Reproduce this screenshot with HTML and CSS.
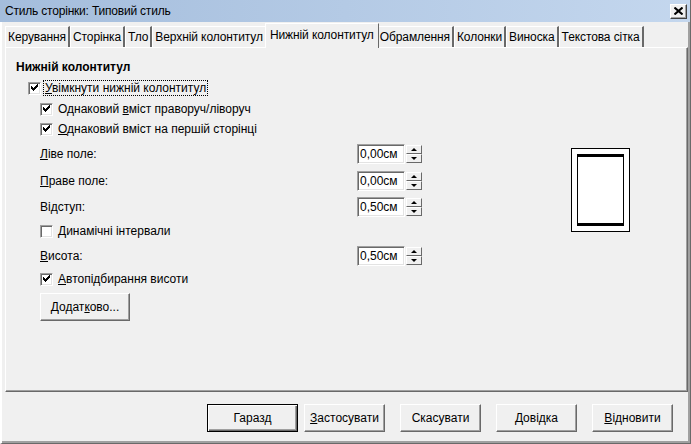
FILE: index.html
```html
<!DOCTYPE html>
<html>
<head>
<meta charset="utf-8">
<link rel="stylesheet" href="styles.css">
</head>
<body>
<div class="window">
  <div class="titlebar">
    <span class="title">Стиль сторінки: Типовий стиль</span>
    <span class="close"><svg width="9" height="8" viewBox="0 0 9 8"><path d="M0.5 0.5 L8.5 7.5 M8.5 0.5 L0.5 7.5" stroke="#000" stroke-width="2"/></svg></span>
  </div>
  <div class="tabs">
    <span class="tab">Керування</span>
    <span class="tab">Сторінка</span>
    <span class="tab">Тло</span>
    <span class="tab">Верхній колонтитул</span>
    <span class="tab active">Нижній колонтитул</span>
    <span class="tab">Обрамлення</span>
    <span class="tab">Колонки</span>
    <span class="tab">Виноска</span>
    <span class="tab">Текстова сітка</span>
  </div>
  <div class="panel">
    <div class="left">
      <div class="heading">Нижній колонтитул</div>
      <div class="row cbrow r-cb1 lvl1">
        <span class="cb checked"></span>
        <span class="focus"><u>У</u>вімкнути нижній колонтитул</span>
      </div>
      <div class="row cbrow r-cb2 lvl2">
        <span class="cb checked"></span>
        <span class="lbl">Однаковий <u>в</u>міст праворуч/ліворуч</span>
      </div>
      <div class="row cbrow r-cb3 lvl2">
        <span class="cb checked"></span>
        <span class="lbl"><u>О</u>днаковий вміст на першій сторінці</span>
      </div>
      <div class="row fieldrow r-f1 lvl2">
        <span class="flabel"><u>Л</u>іве поле:</span>
        <span class="spin"><span class="val">0,00см</span><span class="arrows"><span class="up"></span><span class="down"></span></span></span>
      </div>
      <div class="row fieldrow r-f2 lvl2">
        <span class="flabel"><u>П</u>раве поле:</span>
        <span class="spin"><span class="val">0,00см</span><span class="arrows"><span class="up"></span><span class="down"></span></span></span>
      </div>
      <div class="row fieldrow r-f3 lvl2">
        <span class="flabel">Ві<u>д</u>ступ:</span>
        <span class="spin"><span class="val">0,50см</span><span class="arrows"><span class="up"></span><span class="down"></span></span></span>
      </div>
      <div class="row cbrow r-cb4 lvl2">
        <span class="cb"></span>
        <span class="lbl"><u>Д</u>инамічні інтервали</span>
      </div>
      <div class="row fieldrow r-f4 lvl2">
        <span class="flabel"><u>В</u>исота:</span>
        <span class="spin"><span class="val">0,50см</span><span class="arrows"><span class="up"></span><span class="down"></span></span></span>
      </div>
      <div class="row cbrow r-cb5 lvl2">
        <span class="cb checked"></span>
        <span class="lbl"><u>А</u>втопідбирання висоти</span>
      </div>
      <div class="row r-btn lvl2">
        <span class="btn more">Додат<u>к</u>ово...</span>
      </div>
    </div>
    <div class="preview">
      <div class="page"><div class="inner"></div></div>
    </div>
  </div>
  <div class="footer">
    <span class="btn fbtn default">Гаразд</span>
    <span class="btn fbtn apply"><u>З</u>астосувати</span>
    <span class="btn fbtn">Скасувати</span>
    <span class="btn fbtn"><u>Д</u>овідка</span>
    <span class="btn fbtn"><u>В</u>ідновити</span>
  </div>
</div>
</body>
</html>
```
FILE: styles.css
```css
* { box-sizing: border-box; }
html, body { margin: 0; padding: 0; }
body {
  width: 691px; height: 444px; overflow: hidden;
  background: #f0f0f0;
  font-family: "Liberation Sans", Arial, sans-serif;
  font-size: 12px;
  color: #000;
}
u { text-decoration: underline; text-underline-offset: 1px; }
.window {
  width: 691px; height: 444px;
  display: flex; flex-direction: column;
  border-left: 2px solid #fff;
  border-right: 1px solid #696969;
  border-bottom: 1px solid #696969;
  box-shadow: inset -2px -2px 0 #a0a0a0;
  position: relative;
}
.titlebar {
  height: 22px; flex: none;
  margin-left: -2px;
  background: linear-gradient(to right, #a4bddc, #c4d7ee);
  display: flex; align-items: center; justify-content: space-between;
  padding: 0 3px 0 5px;
}
.title { font-size: 12px; color: #000; letter-spacing: -0.2px; }
.close {
  width: 17px; height: 15px;
  background: #f0f0f0;
  border: 1px solid; border-color: #fff #404040 #404040 #fff;
  box-shadow: inset -1px -1px 0 #a0a0a0;
  display: flex; align-items: center; justify-content: center;
}
.tabs {
  display: flex; height: 25px; flex: none;
  padding-left: 3px; align-items: flex-end;
  letter-spacing: -0.1px;
}
.tab {
  height: 21px; padding: 0 2px 0 2px;
  display: flex; align-items: center;
  border-top: 1px solid #fff; border-left: 1px solid #fff;
  border-right: 2px solid #696969;
  white-space: nowrap;
  background: #f0f0f0;
}
.tab.active {
  height: 25px; margin: 0 -2px -1px -2px; padding: 0 4px 2px 4px;
  position: relative; z-index: 2;
  border-right-width: 1px;
}
.panel {
  height: 345px; flex: none;
  margin: 0 0 0 3px; width: 683px;
  border-top: 1px solid #fff; border-left: 1px solid #fff;
  border-right: 1px solid #696969; border-bottom: 1px solid #696969;
  box-shadow: inset -1px -1px 0 #a0a0a0;
  display: flex; position: relative;
}
.left { width: 430px; padding-left: 10px; display: flex; flex-direction: column; }
.heading { font-weight: bold; margin-top: 11px; height: 16px; line-height: 16px; }
.row { display: flex; align-items: center; }
.cbrow { height: 16px; }
.fieldrow { height: 20px; width: 406px; justify-content: space-between; }
.lvl1 { padding-left: 12px; }
.lvl2 { padding-left: 24px; }
.r-cb1 { margin-top: 5px; }
.r-cb2 { margin-top: 5px; }
.r-cb3 { margin-top: 4px; }
.r-f1 { margin-top: 7px; }
.r-f2 { margin-top: 7px; }
.r-f3 { margin-top: 6px; }
.r-cb4 { margin-top: 6px; }
.r-f4 { margin-top: 7px; }
.r-cb5 { margin-top: 5px; }
.r-btn { margin-top: 6px; }
.cb {
  width: 13px; height: 13px; flex: none;
  background: #fff;
  border: 1px solid; border-color: #a0a0a0 #fff #fff #a0a0a0;
  box-shadow: inset 1px 1px 0 #696969, inset -1px -1px 0 #e3e3e3;
  margin-right: 4px; position: relative;
}
.cb.checked::after {
  content: ""; position: absolute; left: 2px; top: 1px;
  width: 7px; height: 7px;
  background:
    linear-gradient(#000,#000) 0 2px/1px 3px no-repeat,
    linear-gradient(#000,#000) 1px 3px/1px 3px no-repeat,
    linear-gradient(#000,#000) 2px 4px/1px 3px no-repeat,
    linear-gradient(#000,#000) 3px 3px/1px 3px no-repeat,
    linear-gradient(#000,#000) 4px 2px/1px 3px no-repeat,
    linear-gradient(#000,#000) 5px 1px/1px 3px no-repeat,
    linear-gradient(#000,#000) 6px 0/1px 3px no-repeat;
}
.focus { outline: 1px dotted #000; outline-offset: 0; padding: 0 1px; line-height: 14px; margin-left: -1px; }
.lbl { margin-left: 1px; }
.spin { display: flex; height: 20px; width: 65px; }
.val {
  width: 48px; height: 20px; background: #fff;
  border: 1px solid; border-color: #a0a0a0 #fff #fff #a0a0a0;
  box-shadow: inset 1px 1px 0 #696969, inset -1px -1px 0 #e3e3e3;
  padding-left: 2px; line-height: 18px;
}
.arrows { display: flex; flex-direction: column; width: 17px; padding: 1px 0 1px 1px; }
.up, .down {
  height: 9px; background: #f0f0f0;
  border: 1px solid; border-color: #fff #696969 #696969 #fff;
  position: relative;
}
.up::after, .down::after {
  content: ""; position: absolute; left: 4px; width: 0; height: 0;
  border-left: 3px solid transparent; border-right: 3px solid transparent;
}
.up::after { top: 2px; border-bottom: 3px solid #000; }
.down::after { top: 2px; border-top: 3px solid #000; }
.btn {
  display: flex; align-items: center; justify-content: center;
  background: #f0f0f0;
  border: 1px solid; border-color: #fff #696969 #696969 #fff;
  box-shadow: inset -1px -1px 0 #a0a0a0;
}
.more { width: 90px; height: 28px; }
.preview { flex: 1; }
.page {
  margin: 100px 0 0 135px;
  width: 59px; height: 84px; background: #fff; border: 1px solid #000;
  padding: 5px;
}
.inner { width: 47px; height: 72px; border: 1px solid #000; border-top-width: 3px; border-bottom-width: 3px; }
.footer {
  display: flex; padding: 12px 0 0 205px; gap: 15px;
}
.fbtn { width: 81px; height: 28px; }
.fbtn.default { width: 91px; border-color: #000; box-shadow: inset 1px 1px 0 #fff, inset -1px -1px 0 #696969, inset -2px -2px 0 #a0a0a0; }
.fbtn.apply { margin-left: -9px; }
```
